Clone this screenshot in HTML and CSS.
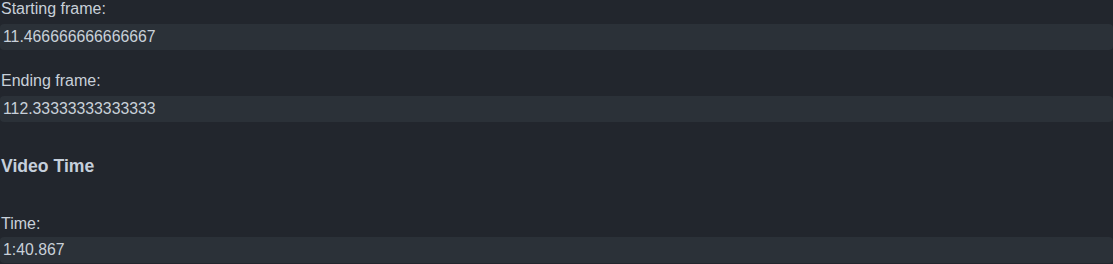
FILE: index.html
```html
<!DOCTYPE html>
<html>
<head>
<meta charset="utf-8">
<link rel="stylesheet" href="styles.css">
</head>
<body>
<div class="panel">
  <div class="field">
    <label class="label">Starting frame:</label>
    <div class="value">11.466666666666667</div>
  </div>
  <div class="field">
    <label class="label">Ending frame:</label>
    <div class="value">112.33333333333333</div>
  </div>
  <h4 class="heading">Video Time</h4>
  <div class="field field-tight">
    <label class="label">Time:</label>
    <div class="value">1:40.867</div>
  </div>
</div>
</body>
</html>
```

FILE: styles.css
```css
html, body {
  margin: 0;
  padding: 0;
  background: #22262d;
}
body {
  font-family: "Liberation Sans", Arial, sans-serif;
  color: #c8d0d9;
  width: 1113px;
  height: 264px;
  overflow: hidden;
}
.panel {
  display: flex;
  flex-direction: column;
}
.field {
  display: flex;
  flex-direction: column;
}
.field + .field {
  margin-top: 22px;
}
.label {
  display: block;
  font-size: 16px;
  line-height: 18px;
  height: 18px;
  margin-bottom: 6px;
  padding-left: 1px;
}
.field-tight .label {
  margin-bottom: 4px;
}
.value {
  height: 26px;
  line-height: 26px;
  font-size: 15.8px;
  padding-left: 3px;
  background: #2b3138;
  border-radius: 4px;
  color: #c8d0d9;
}
.heading {
  margin: 34px 0 39px 0;
  font-size: 17.6px;
  line-height: 20px;
  font-weight: bold;
  color: #c5cfdb;
  padding-left: 1px;
}
```
